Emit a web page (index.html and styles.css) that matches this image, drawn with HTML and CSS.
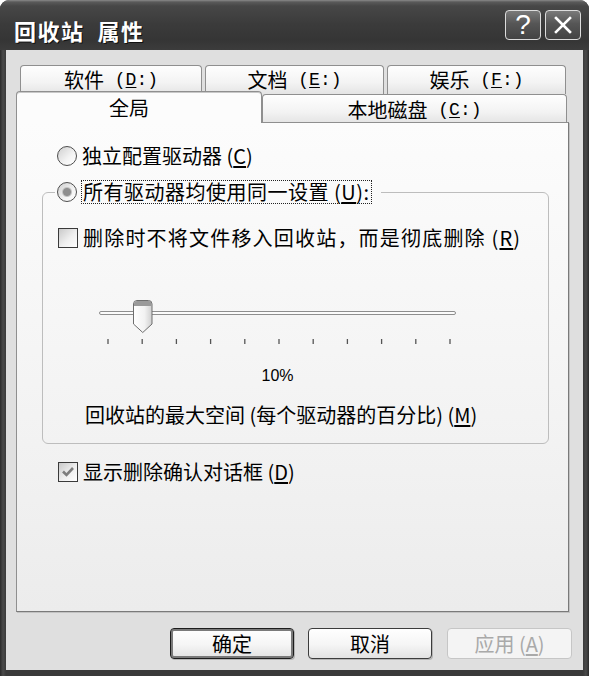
FILE: index.html
```html
<!DOCTYPE html>
<html lang="zh-CN">
<head>
<meta charset="utf-8">
<title>回收站 属性</title>
<link rel="stylesheet" href="styles.css">
</head>
<body>
<div class="window">
  <div class="titlebar">
    <div class="title">回收站&nbsp; 属性</div>
    <div class="tbtns">
      <div class="tbtn help">?</div>
      <div class="tbtn close">
        <svg width="22" height="22" viewBox="0 0 22 22"><path d="M4 4 L18 18 M18 4 L4 18" stroke="#fff" stroke-width="2.6" stroke-linecap="square"/></svg>
      </div>
    </div>
  </div>
  <div class="client">
    <div class="tabs">
      <div class="tabrow row1">
        <div class="tab w1">软件<span class="k"> (<u>D</u>:)</span></div>
        <div class="tab w2">文档<span class="k"> (<u>E</u>:)</span></div>
        <div class="tab w2">娱乐<span class="k"> (<u>F</u>:)</span></div>
      </div>
      <div class="tabrow row2">
        <div class="tab sel">全局</div>
        <div class="tab w4">本地磁盘<span class="k"> (<u>C</u>:)</span></div>
      </div>
    </div>
    <div class="panel">
      <div class="opt first">
        <span class="radio"></span>
        <span class="lbl">独立配置驱动器 (<u>C</u>)</span>
      </div>
      <fieldset class="group">
        <legend class="legend">
          <span class="radio on"></span>
          <span class="lbl focus">所有驱动器均使用同一设置 (<u>U</u>):</span>
        </legend>
        <div class="opt">
          <span class="check"></span>
          <span class="lbl wide">删除时不将文件移入回收站，而是彻底删除 (<u>R</u>)</span>
        </div>
        <svg class="slider" width="362" height="48" viewBox="0 0 362 48">
          <defs>
            <linearGradient id="thumbg" x1="0" y1="0" x2="1" y2="0">
              <stop offset="0" stop-color="#ffffff"/>
              <stop offset="0.6" stop-color="#f2f2f2"/>
              <stop offset="1" stop-color="#cfcfcf"/>
            </linearGradient>
          </defs>
          <rect x="2.5" y="13.5" width="356" height="3" rx="1.5" fill="#fbfbfb" stroke="#8e8e8e"/>
          <path d="M36.5,6 Q36.5,2.5 40,2.5 H51.5 Q55,2.5 55,6 V26 L45.75,34.5 L36.5,26 Z" fill="url(#thumbg)" stroke="#6e6e6e"/>
          <path d="M37,8 V6 Q37,3 40,3 H51.5 Q54.5,3 54.5,6 V8 Z" fill="#9a9a9a"/>
          <g stroke="#555" stroke-width="1.3">
            <line x1="11" y1="41" x2="11" y2="46"/>
            <line x1="45.2" y1="41" x2="45.2" y2="46"/>
            <line x1="79.4" y1="41" x2="79.4" y2="46"/>
            <line x1="113.6" y1="41" x2="113.6" y2="46"/>
            <line x1="147.8" y1="41" x2="147.8" y2="46"/>
            <line x1="182" y1="41" x2="182" y2="46"/>
            <line x1="216.2" y1="41" x2="216.2" y2="46"/>
            <line x1="250.4" y1="41" x2="250.4" y2="46"/>
            <line x1="284.6" y1="41" x2="284.6" y2="46"/>
            <line x1="318.8" y1="41" x2="318.8" y2="46"/>
            <line x1="353" y1="41" x2="353" y2="46"/>
          </g>
        </svg>
        <div class="pct">10%</div>
        <div class="caption">回收站的最大空间 (每个驱动器的百分比) (<u>M</u>)</div>
      </fieldset>
      <div class="opt last">
        <span class="check on">
          <svg width="18" height="18" viewBox="0 0 18 18"><path d="M4 8.5 L7.5 12 L14 5" fill="none" stroke="#7d7d7d" stroke-width="2.6"/></svg>
        </span>
        <span class="lbl">显示删除确认对话框 (<u>D</u>)</span>
      </div>
    </div>
    <div class="buttons">
      <div class="btn default">确定</div>
      <div class="btn">取消</div>
      <div class="btn disabled">应用 (<u>A</u>)</div>
    </div>
  </div>
</div>
</body>
</html>
```

FILE: styles.css
```css
* { box-sizing: border-box; }
html, body { margin: 0; padding: 0; }
body {
  width: 589px;
  height: 676px;
  overflow: hidden;
  background: #ffffff;
  font-family: "Noto Sans CJK SC", "Noto Sans CJK TC", sans-serif;
  font-size: 20px;
  color: #000;
}
u { text-decoration: underline; text-underline-offset: 2px; }

.window {
  width: 589px;
  height: 676px;
  display: flex;
  flex-direction: column;
  background: linear-gradient(to right, #2a2a2a 0, #4a4a4a 3px, #3a3a3a 6px, #3a3a3a 583px, #4a4a4a 586px, #2a2a2a 589px);
  border-radius: 9px 9px 0 0;
}

.titlebar {
  height: 50px;
  flex: none;
  display: flex;
  align-items: center;
  justify-content: space-between;
  padding: 0 8px 0 14px;
  border-radius: 9px 9px 0 0;
  background: linear-gradient(to bottom, #8a8a8a 0, #5a5a5a 2px, #474747 6px, #3b3b3b 24px, #353535 40px, #3c3c3c 50px);
}
.title {
  margin-top: 9px;
  color: #fff;
  font-size: 22px;
  font-weight: bold;
  line-height: 26px;
  text-shadow: 1px 1px 0 #111;
  letter-spacing: 1.5px;
  white-space: pre;
}
.tbtns { display: flex; gap: 4px; }
.tbtn {
  width: 36px;
  height: 30px;
  border: 1.5px solid #dcdcdc;
  border-radius: 4px;
  background: linear-gradient(to bottom, #7a7a7a, #565656 45%, #434343);
  display: flex;
  align-items: center;
  justify-content: center;
  color: #fff;
}
.help {
  font-family: "Liberation Sans", sans-serif;
  font-size: 28px;
  line-height: 1;
}

.client {
  flex: 1;
  margin: 0 6px 6px 6px;
  background: #dfdfdf;
  padding: 15px 14px 11px 10px;
  display: flex;
  flex-direction: column;
}

.tabrow { display: flex; }
.row1 { margin-left: 4px; gap: 3px; height: 29px; }
.row2 { margin-top: -3px; height: 32px; align-items: flex-end; }
.tab {
  display: flex;
  align-items: center;
  justify-content: center;
  height: 29px;
  border: 1px solid #8f8f8f;
  border-bottom: none;
  border-radius: 4px 4px 0 0;
  background: linear-gradient(to bottom, #fefefe, #f3f3f3 60%, #e4e4e4);
  font-size: 20px;
  line-height: 1;
  white-space: pre;
}
.k {
  font-family: "Liberation Mono", monospace;
  font-size: 18px;
}
.w1 { width: 182px; }
.w2 { width: 179px; }
.w4 { width: 305px; padding-top: 2px; }
.tab.sel {
  position: relative;
  z-index: 2;
  width: 246px;
  height: 32px;
  padding-right: 20px;
  background: #fcfcfc;
  border-color: #8f8f8f;
  box-shadow: inset 0 1px 0 #c8c8c8;
}

.panel {
  margin-top: -1px;
  height: 490px;
  border: 1px solid #8f8f8f;
  border-right-color: #7a7a7a;
  border-bottom-color: #7a7a7a;
  box-shadow: 1px 1px 0 #c2c2c2;
  background: linear-gradient(to bottom, #fcfcfc, #f3f3f3 60%, #ececec);
  padding: 21px 0 0 0;
}

.opt {
  display: flex;
  align-items: center;
  height: 24px;
  gap: 5px;
  line-height: 24px;
  white-space: pre;
}
.opt.first { margin-left: 40px; }
.opt.last { margin-left: 41px; margin-top: 16px; }
.wide { letter-spacing: 1.2px; }

.radio {
  flex: none;
  width: 20px;
  height: 20px;
  border-radius: 50%;
  border: 1px solid #4d4d4d;
  background: linear-gradient(135deg, #cfcfcf, #f4f4f4 60%, #ffffff);
}
.radio.on {
  background:
    radial-gradient(circle, #8e8e8e 0, #8e8e8e 3.5px, #c4c4c4 4.5px, rgba(255,255,255,0) 5.5px),
    linear-gradient(135deg, #cfcfcf, #f4f4f4 60%, #ffffff);
}
.check {
  flex: none;
  width: 20px;
  height: 20px;
  border: 1px solid #3a3a3a;
  background: linear-gradient(135deg, #c9c9c9, #efefef 55%, #ffffff);
  display: flex;
  align-items: center;
  justify-content: center;
}

.group {
  margin: 12px 19px 0 25px;
  padding: 22px 0 16px 15px;
  border: 1px solid #bdbdbd;
  border-radius: 6px;
  min-width: 0;
}
.legend {
  display: flex;
  align-items: center;
  gap: 4px;
  height: 24px;
  padding: 0 9px 0 2px;
  margin-left: -3px;
  white-space: pre;
}
.focus {
  border: 1px dotted #222;
  height: 24px;
  line-height: 22px;
  padding: 0 1px;
  letter-spacing: 0.5px;
}

.slider {
  display: block;
  margin: 48px 0 0 39px;
}
.pct {
  width: 357px;
  margin: 20px 0 0 41px;
  text-align: center;
  font-family: "Liberation Sans", sans-serif;
  font-size: 16px;
  line-height: 20px;
}
.caption {
  margin: 17px 0 0 27px;
  line-height: 24px;
  white-space: pre;
}

.buttons {
  margin-top: 16px;
  margin-right: -3px;
  display: flex;
  justify-content: flex-end;
  gap: 14px;
}
.btn {
  width: 124px;
  height: 31px;
  display: flex;
  align-items: center;
  justify-content: center;
  border: 1px solid #3c3c3c;
  border-radius: 4px;
  background: linear-gradient(to bottom, #ffffff, #f5f5f5 55%, #e2e2e2);
  font-size: 20px;
  line-height: 1;
  white-space: pre;
  box-shadow: 1px 1px 0 #b5b5b5;
}
.btn.default {
  border-color: #1c1c1c;
  box-shadow: inset 0 0 0 2px #7a7a7a, 1px 1px 0 #b5b5b5;
}
.btn.disabled {
  width: 125px;
  margin-left: 1px;
  border-color: #c6c6c6;
  background: #f4f4f4;
  color: #a9a9a9;
  box-shadow: none;
}
```
